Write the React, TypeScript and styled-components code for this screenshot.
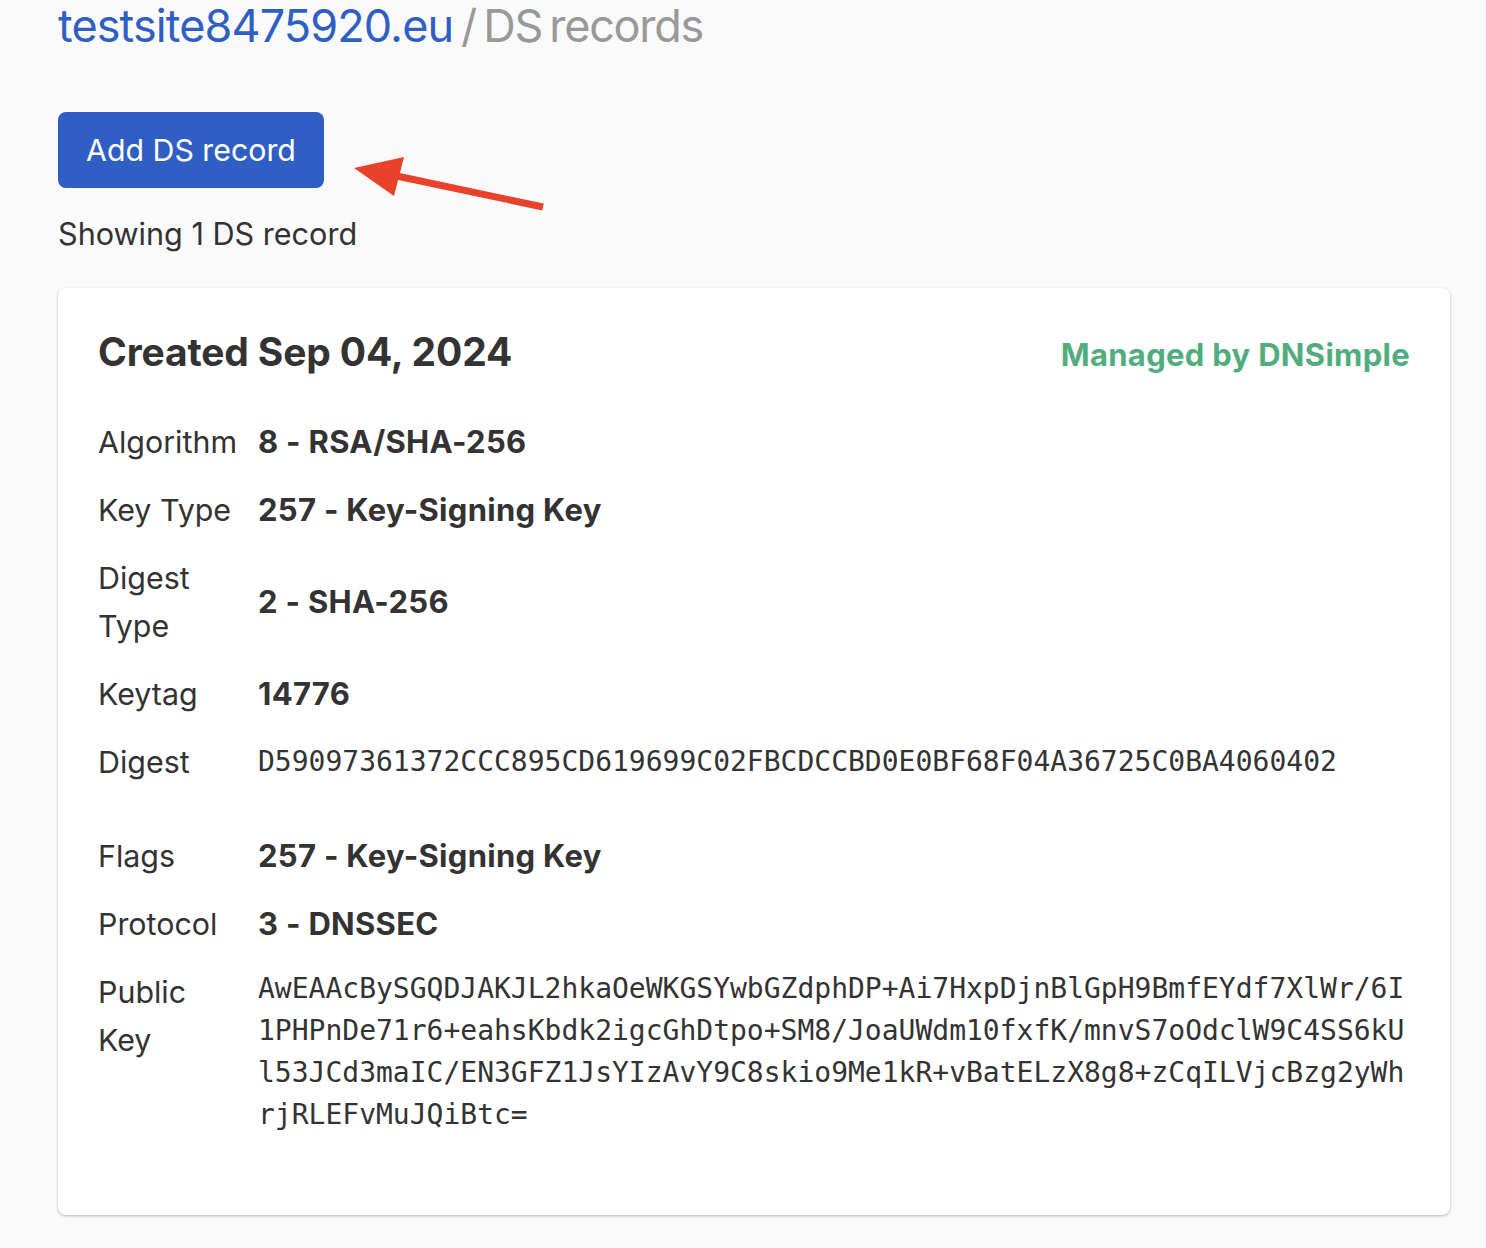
import React from "react";
import styled, { createGlobalStyle } from "styled-components";

const Global = createGlobalStyle`
  html, body { margin: 0; padding: 0; background: #fafafa; }
  body {
    font-family: Inter, "Noto Sans", Arial, sans-serif;
    color: #333333;
    -webkit-font-smoothing: antialiased;
  }
`;

const Page = styled.main`
  position: relative;
  padding: 0 36px 40px 58px;
`;

const Title = styled.h1`
  margin: 0;
  font-size: 45px;
  font-weight: 400;
  line-height: 52px;
  letter-spacing: -0.9px;
  word-spacing: -4px;
`;

const Domain = styled.a`
  color: #2f5fc4;
  text-decoration: none;
`;

const Crumb = styled.span`
  color: #999999;
  letter-spacing: -1.3px;
`;

const PrimaryButton = styled.button`
  display: inline-block;
  margin-top: 60px;
  padding: 18px 28px;
  border: none;
  border-radius: 8px;
  background: #2f5ec4;
  color: #ffffff;
  font-family: inherit;
  font-size: 30.3px;
  line-height: 40px;
  cursor: pointer;
`;

const Arrow = styled.svg`
  position: absolute;
  left: 342px;
  top: 145px;
  overflow: visible;
`;

const Count = styled.p`
  margin: 22px 0 0;
  font-size: 30.6px;
  line-height: 48px;
`;

const Card = styled.section`
  margin-top: 30px;
  background: #ffffff;
  border-radius: 8px;
  box-shadow: 0 1px 3px rgba(0, 0, 0, 0.28);
  padding: 40px 40px 69px;
`;

const CardHeader = styled.header`
  display: flex;
  justify-content: space-between;
  align-items: baseline;
  margin-bottom: 32px;
`;

const CardTitle = styled.h2`
  margin: 0;
  font-size: 39px;
  font-weight: 700;
  line-height: 48px;
  letter-spacing: -0.15px;
`;

const Managed = styled.span`
  color: #52ad7e;
  font-size: 31px;
  font-weight: 700;
  letter-spacing: 0.3px;
`;

const Group = styled.dl<{ $gap?: number }>`
  margin: 0 0 ${(p) => p.$gap ?? 0}px;
`;

const Row = styled.div<{ $top?: boolean }>`
  display: grid;
  grid-template-columns: 144px 1fr;
  column-gap: 16px;
  align-items: ${(p) => (p.$top ? "start" : "center")};
  padding: 10px 0;
`;

const Label = styled.dt`
  margin: 0;
  font-size: 30.4px;
  line-height: 48px;
  color: #333333;
`;

const Value = styled.dd`
  margin: 0;
  font-size: 31px;
  line-height: 48px;
  font-weight: 700;
  letter-spacing: 0.3px;
`;

const Mono = styled.dd`
  margin: 0;
  font-family: "DejaVu Sans Mono", "Liberation Mono", monospace;
  font-size: 28px;
  line-height: 42px;
  color: #333333;
  word-break: break-all;
`;

export default function App() {
  return (
    <>
      <Global />
      <Page>
        <Title>
          <Domain href="#">testsite8475920.eu</Domain> <Crumb>/ DS records</Crumb>
        </Title>
        <PrimaryButton>Add DS record</PrimaryButton>
        <Arrow width="200" height="70" viewBox="0 0 200 70">
          <line x1="201" y1="62" x2="50" y2="30" stroke="#e8432a" strokeWidth="7" />
          <polygon points="12,23 62,12 52,51" fill="#e8432a" />
        </Arrow>
        <Count>Showing 1 DS record</Count>
        <Card>
          <CardHeader>
            <CardTitle>Created Sep 04, 2024</CardTitle>
            <Managed>Managed by DNSimple</Managed>
          </CardHeader>
          <Group $gap={26}>
            <Row>
              <Label>Algorithm</Label>
              <Value>8 - RSA/SHA-256</Value>
            </Row>
            <Row>
              <Label>Key Type</Label>
              <Value>257 - Key-Signing Key</Value>
            </Row>
            <Row>
              <Label>Digest Type</Label>
              <Value>2 - SHA-256</Value>
            </Row>
            <Row>
              <Label>Keytag</Label>
              <Value>14776</Value>
            </Row>
            <Row>
              <Label>Digest</Label>
              <Mono>D59097361372CCC895CD619699C02FBCDCCBD0E0BF68F04A36725C0BA4060402</Mono>
            </Row>
          </Group>
          <Group>
            <Row>
              <Label>Flags</Label>
              <Value>257 - Key-Signing Key</Value>
            </Row>
            <Row>
              <Label>Protocol</Label>
              <Value>3 - DNSSEC</Value>
            </Row>
            <Row $top>
              <Label>Public Key</Label>
              <Mono>
                AwEAAcBySGQDJAKJL2hkaOeWKGSYwbGZdphDP+Ai7HxpDjnBlGpH9BmfEYdf7XlWr/6I1PHPnDe71r6+eahsKbdk2igcGhDtpo+SM8/JoaUWdm10fxfK/mnvS7oOdclW9C4SS6kUl53JCd3maIC/EN3GFZ1JsYIzAvY9C8skio9Me1kR+vBatELzX8g8+zCqILVjcBzg2yWhrjRLEFvMuJQiBtc=
              </Mono>
            </Row>
          </Group>
        </Card>
      </Page>
    </>
  );
}
